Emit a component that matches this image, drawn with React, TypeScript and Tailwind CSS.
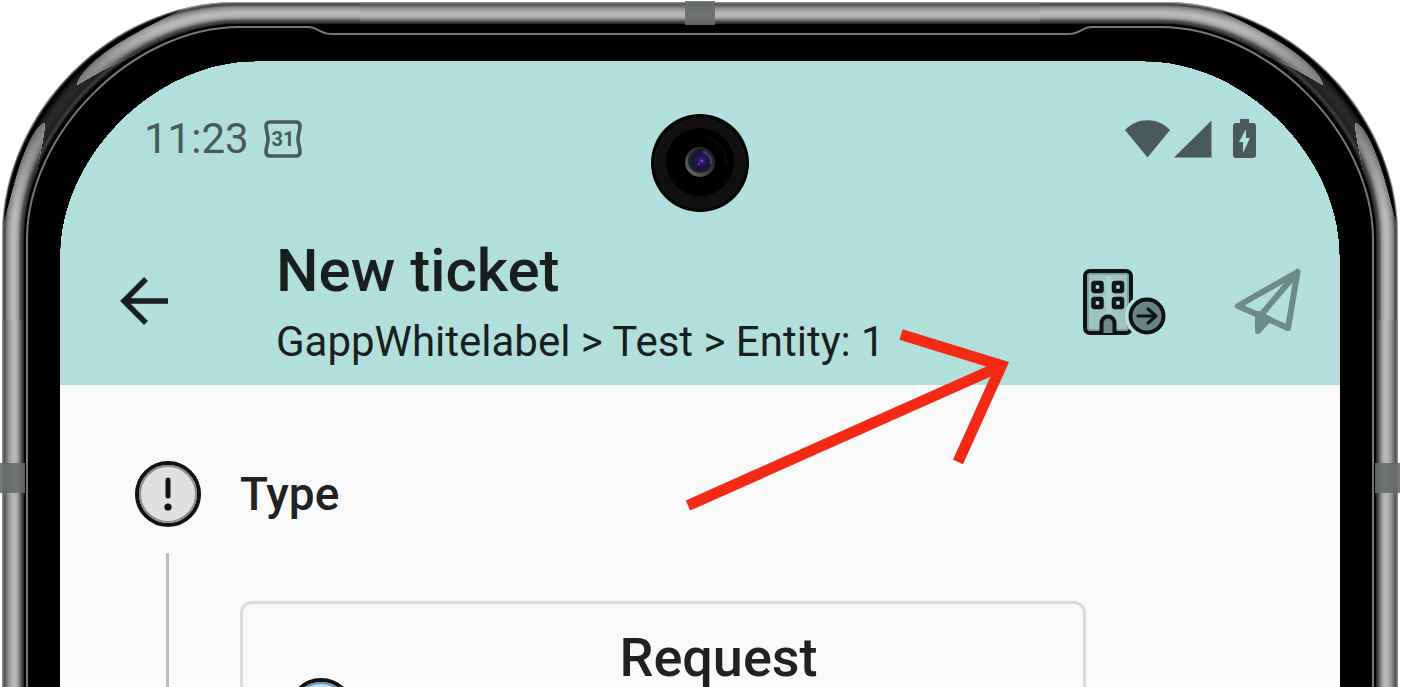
import type { ReactNode } from 'react';

// metal rail shades, one per pixel from the outer edge inwards
const railShades = [
  '#9a9a9a', '#5a5a5a', '#444444', '#5a5a5a', '#7c7c7c', '#8c8c8c', '#989898', '#a2a2a2',
  '#acacac', '#b2b2b2', '#b8b8b8', '#bababa', '#b8b8b8', '#b4b4b4', '#acacac', '#a0a0a0',
  '#8e8e8e', '#707070', '#545454', '#444444', '#3a3a3a', '#222222', '#000000',
];

const darkShades = [
  '#8a8a8a', '#222222', '#000000', '#000000', '#080808', '#141414', '#1c1c1c', '#222222',
  '#262626', '#282828', '#2a2a2a', '#2a2a2a', '#2a2a2a', '#282828', '#262626', '#242424',
  '#222222', '#2c2c2c', '#3a3a3a', '#3a3a3a', '#222222', '#0a0a0a', '#000000',
];

// outline of the phone body, inset by d pixels
const contour = (d: number) => {
  const edge = 2 + d;
  const end = 235 + d * 0.2;
  const k = 111 + d * 0.88;
  return `M${edge} 330 V${end} C${edge} ${k} ${k} ${edge} ${end} ${edge} H370 V330 Z`;
};

const screenContour = 'M60 330 V256 C60 156 155 61 256 61 H370 V330 Z';

function FrameCorner({ id, className = '' }: { id: string; className?: string }) {
  return (
    <svg className={`block ${className}`} width="360" height="320" viewBox="0 0 360 320">
      <defs>
        <radialGradient id={`${id}-shade`} gradientUnits="userSpaceOnUse" cx="62" cy="104" r="120">
          <stop offset="0.1" stopColor="#000" stopOpacity="0.35" />
          <stop offset="1" stopColor="#000" stopOpacity="0" />
        </radialGradient>
        <clipPath id={`${id}-shine`}>
          <path d="M77 85 C80 73 95 59 118 44 C145 28 170 14 215 -4 H370 V60 L200 34 C150 44 110 65 77 85 Z" />
          <path d="M45 123 C36 125 26 146 17 175 C10 198 4 225 -4 250 V330 H40 L30 215 C33 180 43 148 45 123 Z" />
        </clipPath>
        <clipPath id={`${id}-bezel`}>
          <path clipRule="evenodd" d={`M0 0 H360 V320 H0 Z ${screenContour}`} />
        </clipPath>
      </defs>
      <g clipPath={`url(#${id}-bezel)`}>
        <rect width="360" height="320" fill="#fff" />
        {darkShades.map((shade, d) => (
          <path key={d} d={contour(d)} fill={shade} />
        ))}
        <g clipPath={`url(#${id}-shine)`}>
          {railShades.map((shade, d) => (
            <path key={d} d={contour(d)} fill={shade} />
          ))}
          <path d={contour(0)} fill={`url(#${id}-shade)`} />
        </g>
        <path d={contour(22)} fill="#000" />
        <path
          d="M27 320 V240 C27 133 133 27 240 27 H308 C318 27 320 34 332 34 H360"
          fill="none"
          stroke="#777"
          strokeWidth="2"
        />
      </g>
    </svg>
  );
}

function SideRail({ className = '' }: { className?: string }) {
  return (
    <div className={`flex ${className}`}>
      <div className="w-7 bg-[linear-gradient(to_right,#fff_2px,#9a9a9a_2px,#5a5a5a_4px,#5a5a5a_5px,#7c7c7c_7px,#989898_9px,#b2b2b2_12px,#bababa_14px,#b4b4b4_16px,#a0a0a0_18px,#707070_20px,#444_22px,#222_24px,#000_24px,#000_26px,#777_26px,#777_28px)]">
        <div className="mt-[143px] h-[30px] w-[25px] bg-[#666b67]/90" />
      </div>
      <div className="w-8 bg-black" />
    </div>
  );
}

function PhoneFrame() {
  return (
    <div aria-hidden="true" className="pointer-events-none absolute inset-0 grid grid-cols-[360px_1fr_360px] grid-rows-[320px_1fr]">
      <FrameCorner id="left" />
      <div>
        <div className="flex h-[26px] justify-center bg-[linear-gradient(to_bottom,#fff_2px,#9a9a9a_2px,#5a5a5a_4px,#5a5a5a_5px,#7c7c7c_7px,#989898_9px,#b2b2b2_12px,#bababa_14px,#b4b4b4_16px,#a0a0a0_18px,#707070_20px,#444_22px,#222_24px,#000_24px)]">
          <div className="mt-px h-6 w-[30px] bg-[#666b67]/90" />
        </div>
        <div className="h-[7px] bg-black" />
        <div className="h-[2px] bg-[#777]" />
        <div className="h-[26px] bg-black" />
      </div>
      <FrameCorner id="right" className="-scale-x-100" />
      <SideRail />
      <div />
      <SideRail className="-scale-x-100" />
    </div>
  );
}

function Camera() {
  return (
    <svg aria-hidden="true" className="absolute left-1/2 top-[114px] -translate-x-1/2" width="98" height="98" viewBox="0 0 98 98">
      <defs>
        <radialGradient id="lens" cx="55%" cy="48%" r="55%">
          <stop offset="0" stopColor="#4a23b4" />
          <stop offset="0.25" stopColor="#2a1465" />
          <stop offset="0.65" stopColor="#15162f" />
          <stop offset="1" stopColor="#172c36" />
        </radialGradient>
        <linearGradient id="lens-rim" x1="0" y1="1" x2="1" y2="0">
          <stop offset="0" stopColor="#77736f" />
          <stop offset="0.5" stopColor="#3c3a3c" />
          <stop offset="1" stopColor="#16121a" />
        </linearGradient>
      </defs>
      <circle cx="49" cy="49" r="49" fill="#000" />
      <circle cx="49" cy="49" r="46" fill="#101010" />
      <circle cx="49" cy="48" r="34" fill="#000" />
      <path d="M56 23 A27 27 0 0 1 75 50" fill="none" stroke="#0a0a0c" strokeWidth="2" />
      <circle cx="49" cy="48" r="15" fill="url(#lens-rim)" />
      <circle cx="49" cy="47" r="12" fill="url(#lens)" />
      <path d="M53 38 A11 11 0 0 1 60 49" fill="none" stroke="#8b5a9b" strokeWidth="2.500" strokeLinecap="round" opacity="0.5" />
      <circle cx="51" cy="47" r="1.500" fill="#6d3fe0" />
      <circle cx="48" cy="50" r="1" fill="#6a4fd0" />
    </svg>
  );
}

function CalendarIcon() {
  return (
    <svg width="38" height="38" viewBox="0 0 38 38" role="img" aria-label="Calendar">
      <path
        d="M6 2 H32 Q36 2 36 6 C36 11 34 14 34 19 C34 24 36 27 36 32 Q36 36 32 36 H6 Q2 36 2 32 C2 27 4 24 4 19 C4 14 2 11 2 6 Q2 2 6 2 Z"
        fill="none"
        stroke="currentColor"
        strokeWidth="3.6"
      />
      <text x="19" y="26" textAnchor="middle" fontFamily="Roboto, sans-serif" fontSize="20" fontWeight="700" fill="currentColor">31</text>
    </svg>
  );
}

function StatusBar() {
  return (
    <div className="flex h-[156px] items-center justify-between px-[84px] text-[#495a58]">
      <div className="flex items-center gap-[15px]">
        <span className="text-[42px] leading-none">11:23</span>
        <CalendarIcon />
      </div>
      <div className="flex items-center">
        <svg width="45" height="38" viewBox="0 0 45 38" fill="currentColor">
          <path d="M0 10 C12 -3 33 -3 45 10 L22.500 37.500 Z" />
        </svg>
        <svg className="ml-1" width="38" height="38" viewBox="0 0 38 38" fill="currentColor">
          <path d="M37.500 0.500 V37.500 H0 Z" />
        </svg>
        <svg className="ml-5" width="24" height="40" viewBox="0 0 24 40" fill="currentColor">
          <path fillRule="evenodd" d="M8 0 H17 V4 H21 Q24 4 24 7 V36 Q24 39 21 39 H4 Q1 39 1 36 V7 Q1 4 4 4 H8 Z M14 10 L7 23 H11 V34 L18 19 H14 Z" />
        </svg>
      </div>
    </div>
  );
}

function BackIcon() {
  return (
    <svg width="48" height="48" viewBox="0 0 48 48" fill="none" stroke="#181f1e" strokeWidth="5.500">
      <path d="M48 24 H4 M26 2 L4 24 L26 46" />
    </svg>
  );
}

function BuildingIcon() {
  return (
    <svg width="84" height="68" viewBox="-1 0 84 68" fill="none" stroke="#101514">
      <rect x="2" y="3" width="46" height="62" rx="5" fill="#7f9f9c" strokeWidth="4" />
      <rect x="6" y="7" width="38" height="54" fill="#9fc4c0" stroke="none" />
      <path d="M20 14 H33 M20 30 H33 M26 8 V45" stroke="#b2dfdb" strokeWidth="5" opacity="0.6" />
      <g fill="#b2dfdb" strokeWidth="4.500">
        <rect x="10.500" y="15" width="8" height="8" rx="1" />
        <rect x="31" y="15" width="8" height="8" rx="1" />
        <rect x="10.500" y="31" width="8" height="8" rx="1" />
        <rect x="31" y="31" width="8" height="8" rx="1" />
      </g>
      <path d="M18.500 65 V55 a6.500 6.500 0 0 1 13 0 V65" fill="#6d8986" strokeWidth="4" />
      <circle cx="64" cy="48" r="22" fill="#b2dfdb" stroke="none" />
      <circle cx="64" cy="48" r="16.500" fill="#6a8582" strokeWidth="4" />
      <path d="M55 48 H72 M65 41 L73 48 L65 55" strokeWidth="3.200" strokeLinecap="round" strokeLinejoin="round" />
    </svg>
  );
}

function SendIcon() {
  return (
    <svg width="68" height="68" viewBox="0 0 68 68" fill="none" stroke="#6f8b88" strokeWidth="6" strokeLinejoin="round" strokeLinecap="round">
      <path d="M63.500 4 L4 38 L54 60 Z M63.500 4 L27 47" />
      <path d="M24 46 V63 L35 51 Z" fill="#6f8b88" strokeWidth="6" />
    </svg>
  );
}

function AppBar() {
  return (
    <div className="flex h-[168px] items-center pl-[60px] pr-[38px]">
      <button type="button" aria-label="Back" className="shrink-0">
        <BackIcon />
      </button>
      <div className="ml-[108px] min-w-0 flex-1 whitespace-nowrap pt-2 text-[#181f1e]">
        <h1 className="text-[60px] font-medium leading-[74px]">New ticket</h1>
        <p className="text-[42px] leading-[68px]">GappWhitelabel &gt; Test &gt; Entity: 1</p>
      </div>
      <div className="flex shrink-0 items-center gap-[68px] pt-0.5">
        <button type="button" aria-label="Change entity">
          <BuildingIcon />
        </button>
        <button type="button" aria-label="Send">
          <SendIcon />
        </button>
      </div>
    </div>
  );
}

function Step({ icon, title, children }: { icon: ReactNode; title: string; children: ReactNode }) {
  return (
    <section className="grid grid-cols-[66px_1fr] gap-x-[39px]">
      {icon}
      <h2 className="self-center text-[46px] font-medium leading-[66px]">{title}</h2>
      <div className="ml-[31px] mt-[26px] h-full w-[3px] bg-[#bdbdbd]" />
      <div className="mt-[74px]">{children}</div>
    </section>
  );
}

function AlertIcon() {
  return (
    <svg width="66" height="66" viewBox="0 0 66 66">
      <circle cx="33" cy="33" r="31" fill="#e0e0e0" stroke="#121212" strokeWidth="4" />
      <circle cx="33" cy="33" r="28" fill="none" stroke="#8c8c8c" strokeWidth="2" />
      <path d="M33 19 V35" stroke="#121212" strokeWidth="5" strokeLinecap="round" />
      <circle cx="33" cy="46" r="3.600" fill="#121212" />
    </svg>
  );
}

function RequestIcon() {
  return (
    <svg className="shrink-0" width="66" height="66" viewBox="0 0 66 66">
      <circle cx="33" cy="33" r="31" fill="#bbdefb" stroke="#0f1316" strokeWidth="4" />
      <circle cx="33" cy="33" r="28" fill="none" stroke="#7590a5" strokeWidth="2" />
      <path d="M24 26 a9 9 0 1 1 12 9 q-3 1 -3 5" fill="none" stroke="#0f1316" strokeWidth="4" strokeLinecap="round" />
      <circle cx="33" cy="48" r="3" fill="#0f1316" />
    </svg>
  );
}

function RedArrow() {
  return (
    <svg aria-hidden="true" className="pointer-events-none absolute left-1/2 top-[320px] -ml-5" width="340" height="200" viewBox="680 320 340 200" fill="none" stroke="#f52a14" strokeWidth="11">
      <path d="M688 505.500 L1001 366" />
      <path d="M901 334.500 L1001.500 365.500 L958 462" />
    </svg>
  );
}

export default function App() {
  return (
    <div className="h-screen overflow-hidden bg-white font-[Roboto,sans-serif] text-[#212121]">
      <div className="relative mr-2 h-full">
        <div className="mx-[60px] pt-[61px]">
          <header className="bg-[#b2dfdb]">
            <StatusBar />
            <AppBar />
          </header>
          <main className="min-h-screen bg-[#fafafa] pl-[75px] pr-[254px] pt-[76px]">
            <Step icon={<AlertIcon />} title="Type">
              <button type="button" className="flex w-full items-start rounded-xl border-[3px] border-[#dcdcdc] pb-9 pl-[45px] pt-6">
                <span className="mt-[50px] shrink-0">
                  <RequestIcon />
                </span>
                <span className="flex-1 text-center text-[54px] font-medium leading-[60px]">Request</span>
              </button>
            </Step>
          </main>
        </div>
        <PhoneFrame />
        <Camera />
        <RedArrow />
      </div>
    </div>
  );
}
